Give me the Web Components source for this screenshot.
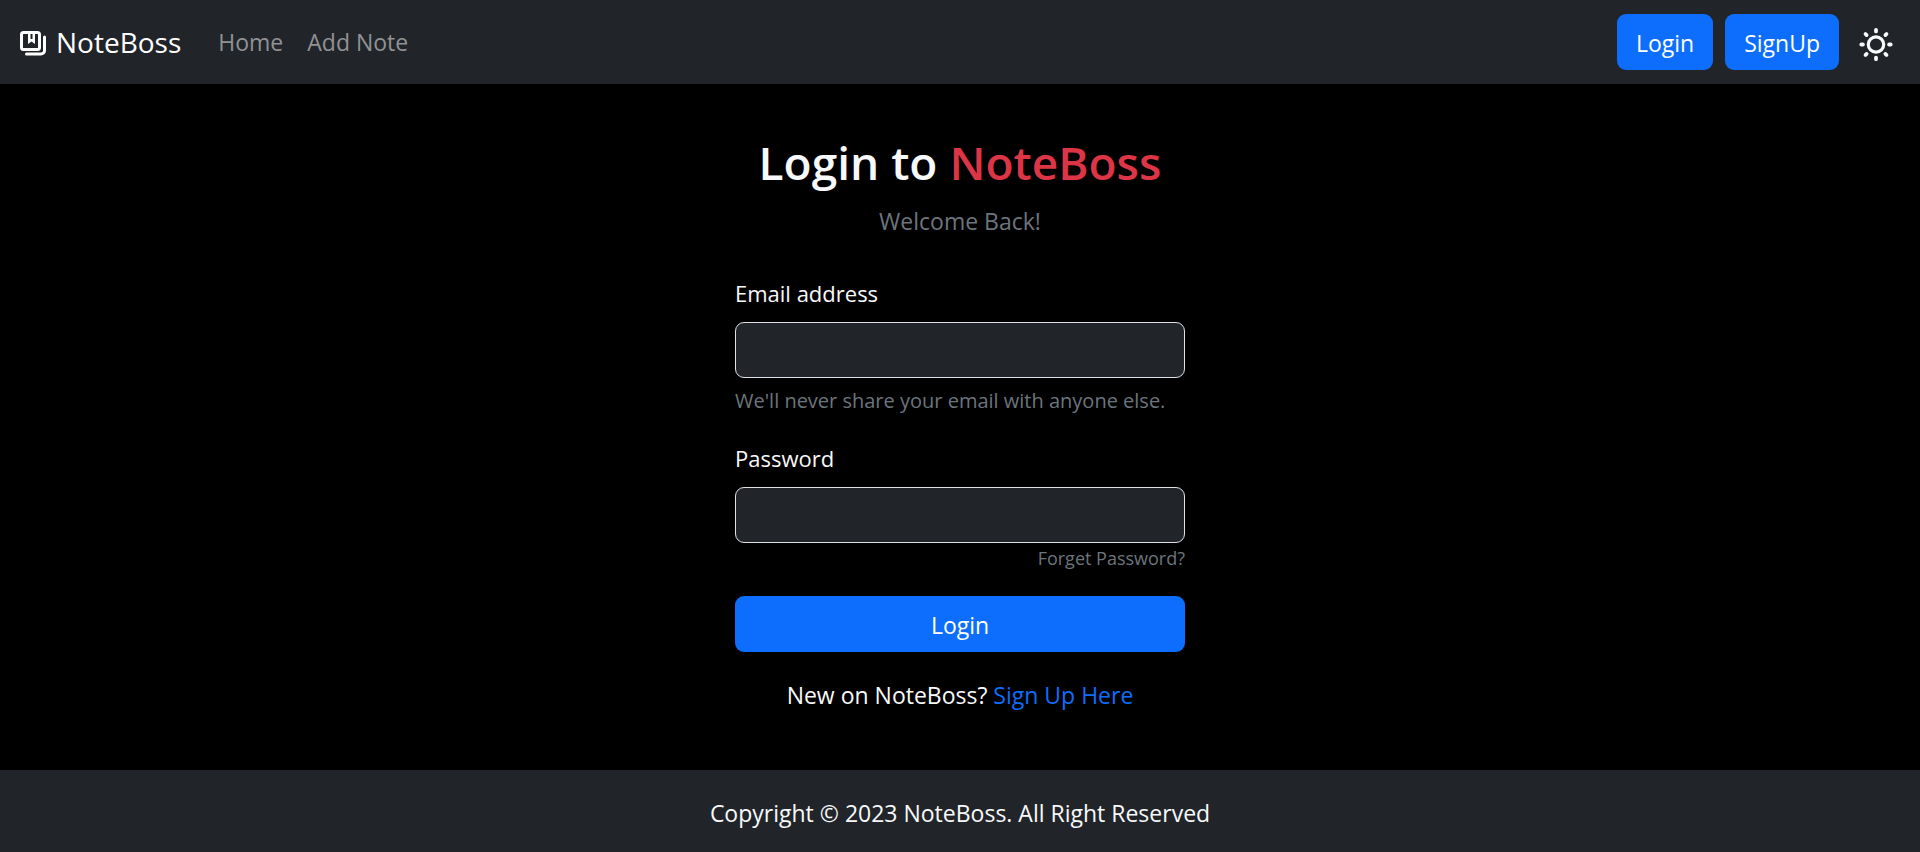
<!DOCTYPE html>
<html lang="en">
<head>
<meta charset="utf-8">
<meta name="viewport" content="width=device-width, initial-scale=1">
<title>NoteBoss</title>
<style>
  body {
    --surface: #212529;
    --light: #f8f9fa;
    --muted: #6c757d;
    --primary: #0d6efd;
    --danger: #dc3545;
    margin: 0;
    background: #000;
    color: #fff;
    font: 23px/36px "Open Sans", "Noto Sans", sans-serif;
  }
</style>
</head>
<body>
<note-app></note-app>
<script>
const define = (name, markup, setup) => {
  const template = document.createElement('template');
  template.innerHTML = markup;
  customElements.define(name, class extends HTMLElement {
    constructor() {
      super();
      this.attachShadow({ mode: 'open' }).append(template.content.cloneNode(true));
    }
    connectedCallback() { if (setup) setup(this, this.shadowRoot); }
  });
};

define('note-button', `
  <style>
    :host { display: block; }
    button {
      display: block; box-sizing: border-box; width: 100%; padding: 11px 19px 9px;
      border: 0; border-radius: 9px; background: var(--primary); color: #fff;
      font: inherit; cursor: pointer;
    }
  </style>
  <button type="button"><slot></slot></button>`);

define('note-navbar', `
  <style>
    :host { display: block; background: var(--surface); }
    nav { display: flex; align-items: center; padding: 14px 22px 14px 18px; }
    a { text-decoration: none; color: inherit; }
    .brand { display: flex; align-items: center; gap: 8px; color: #fff; font-size: 28px; margin-right: 37px; }
    .brand, .links { line-height: 38px; }
    .links { display: flex; gap: 24px; flex: 1; margin: 0; padding: 0; list-style: none; color: #909294; }
    .actions { display: flex; align-items: center; gap: 12px; }
    .theme { display: flex; margin-left: 3px; padding: 0; border: 0; background: none; color: var(--light); cursor: pointer; }
  </style>
  <nav aria-label="Main">
    <a class="brand" href="#">
      <svg width="30" height="30" viewBox="0 0 30 30" fill="none" stroke="currentColor" stroke-width="3" aria-hidden="true">
        <rect x="3.500" y="5.500" width="18" height="17" rx="2"/>
        <path d="M26.500 10v13.500a3.500 3.500 0 0 1-3.500 3.500H8.500" stroke-linecap="round"/>
        <path d="M10 5h7v12l-3.500-2.500L10 17z" fill="currentColor" stroke="none"/>
        <path d="M13.500 7v5" stroke="#212529" stroke-width="2"/>
      </svg>
      <span>NoteBoss</span>
    </a>
    <ul class="links">
      <li><a href="#">Home</a></li>
      <li><a href="#">Add Note</a></li>
    </ul>
    <div class="actions">
      <note-button>Login</note-button>
      <note-button>SignUp</note-button>
      <button class="theme" type="button" aria-label="Toggle theme">
        <svg width="44" height="44" viewBox="-22 -24.500 44 44" fill="none" stroke="currentColor" stroke-linecap="round" aria-hidden="true">
          <circle r="7.700" stroke-width="3.200"/>
          <path stroke-width="3.800" d="M0-14.700v1.600M0 14.700v-1.600M-14.700 0h1.600M14.700 0h-1.600M-10.500-10.500l1.100 1.100M10.500-10.500l-1.100 1.100M-10.500 10.500l1.100-1.100M10.500 10.500l-1.100-1.100"/>
        </svg>
      </button>
    </div>
  </nav>`);

define('note-field', `
  <style>
    :host { display: block; }
    label { display: block; margin-bottom: 11px; color: var(--light); font-size: 22px; }
    input {
      display: block; box-sizing: border-box; width: 100%; height: 56px; padding: 9px 18px;
      border: 1px solid #dee2e6; border-radius: 9px; background: var(--surface); color: #fff; font: inherit;
    }
  </style>
  <label for="control"></label>
  <input id="control">
  <slot></slot>`,
  (host, root) => {
    root.querySelector('label').textContent = host.getAttribute('label');
    root.querySelector('input').type = host.getAttribute('type');
  });

define('note-login', `
  <style>
    :host { display: block; padding: 48px 24px 57px; }
    h1 { margin: 0 0 11px; color: var(--light); font-size: 46px; line-height: 60px; font-weight: 600; text-align: center; }
    h1 span { color: var(--danger); }
    p { margin: 0; text-align: center; }
    .welcome { color: var(--muted); margin-bottom: 36px; }
    form { max-width: 450px; margin: 0 auto; }
    .help { display: block; margin: 7px 0 23px; color: var(--muted); font-size: 20px; line-height: 32px; }
    .forgot { display: block; margin-bottom: 23px; color: var(--muted); font-size: 18px; line-height: 30px; text-align: right; }
    a { color: var(--primary); text-decoration: none; }
    .signup { margin-top: 25px; color: var(--light); }
  </style>
  <h1>Login to <span>NoteBoss</span></h1>
  <p class="welcome">Welcome Back!</p>
  <form>
    <note-field label="Email address" type="email"><span class="help">We'll never share your email with anyone else.</span></note-field>
    <note-field label="Password" type="password"><a class="forgot" href="#">Forget Password?</a></note-field>
    <note-button>Login</note-button>
    <p class="signup">New on NoteBoss? <a href="#">Sign Up Here</a></p>
  </form>`);

define('note-footer', `
  <style>
    :host { display: block; padding: 25px 24px 21px; background: var(--surface); color: var(--light); text-align: center; }
  </style>
  <slot></slot>`);

define('note-app', `
  <style>
    :host { display: flex; flex-direction: column; min-height: 100vh; }
    main { flex: 1; }
  </style>
  <note-navbar></note-navbar>
  <main><note-login></note-login></main>
  <note-footer>Copyright © 2023 NoteBoss. All Right Reserved</note-footer>`);
</script>
</body>
</html>
